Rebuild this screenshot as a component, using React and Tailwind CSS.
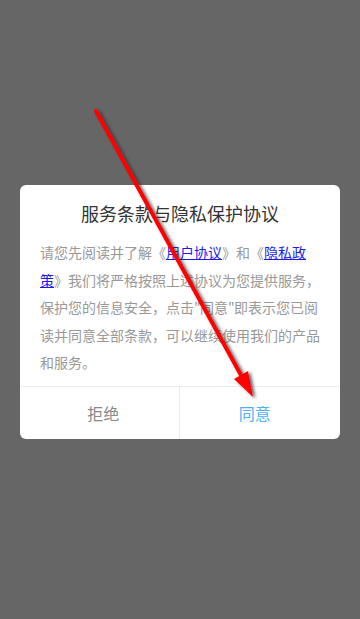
export default function App() {
  const font = { fontFamily: '"Noto Sans CJK SC", "Noto Sans", sans-serif' };
  return (
    <div className="relative w-[360px] h-[619px] bg-[#666666] overflow-hidden" style={font}>
      <div className="flex flex-col items-center pt-[185px]">
        <div className="w-[320px] bg-white rounded-[6px] overflow-hidden">
          <div className="pt-[16px] text-center text-[18px] leading-[24px] text-[#333333]">
            服务条款与隐私保护协议
          </div>
          <div className="px-[20px] pt-[14px] pb-[9px] text-[14px] leading-[27.5px] text-[#999999]">
            请您先阅读并了解《<span className="text-[#1a1aee] underline">用户协议</span>》和《<span className="text-[#1a1aee] underline">隐私政策</span>》我们将严格按照上述协议为您提供服务，保护您的信息安全，点击<span className="inline-block w-[6px] text-center">"</span>同意<span className="inline-block w-[6px] text-center">"</span>即表示您已阅读并同意全部条款，可以继续使用我们的产品和服务。
          </div>
          <div className="flex h-[53px] border-t border-[#ececec]">
            <div className="flex-1 flex items-center justify-center pl-[8px] text-[16px] text-[#8a8a8a] border-r border-[#ececec]">
              拒绝
            </div>
            <div className="flex-1 flex items-center justify-center pr-[10px] text-[16px] text-[#4fb0f4]">
              同意
            </div>
          </div>
        </div>
      </div>
      <svg className="absolute inset-0 pointer-events-none" width="360" height="619" viewBox="0 0 360 619">
        <defs>
          <filter id="sh" x="-20%" y="-20%" width="140%" height="140%">
            <feDropShadow dx="2.5" dy="1.5" stdDeviation="1.5" floodColor="#222" floodOpacity="0.7" />
          </filter>
        </defs>
        <g filter="url(#sh)">
          <line x1="96" y1="111" x2="242" y2="377" stroke="#ff0000" strokeWidth="4" strokeLinecap="round" />
          <polygon points="253,397 248,371 234,379" fill="#ff0000" />
        </g>
      </svg>
    </div>
  );
}
